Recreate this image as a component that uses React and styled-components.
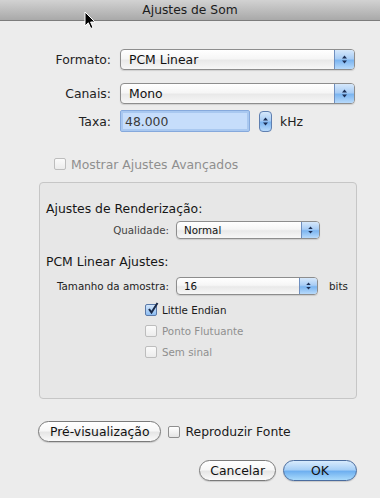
import React from 'react'
import styled, { createGlobalStyle } from 'styled-components'

const GlobalStyle = createGlobalStyle`
  html, body {
    margin: 0;
    padding: 0;
    background: #ececec;
  }
  body {
    font-family: "DejaVu Sans", "Liberation Sans", sans-serif;
    font-size: 12.4px;
    color: #111;
  }
`

const Window = styled.div`
  position: relative;
  width: 380px;
  height: 498px;
  background: #ececec;
  display: flex;
  flex-direction: column;
  overflow: hidden;
`

const TitleBar = styled.div`
  height: 20px;
  border-bottom: 1px solid #7c7c7c;
  background: linear-gradient(#d2d2d2, #a9a9a9);
  display: flex;
  align-items: center;
  justify-content: center;
  color: #1c1c1c;
  font-size: 12.3px;
  flex-shrink: 0;
`

const Content = styled.div`
  display: flex;
  flex-direction: column;
  padding: 28px 23px 0 38px;
`

const Row = styled.div`
  display: flex;
  align-items: center;
  margin-top: ${p => p.mt || 0}px;
  margin-left: ${p => p.ml || 0}px;
`

const Label = styled.span`
  width: ${p => p.w}px;
  text-align: right;
  margin-right: ${p => p.gap || 9}px;
  color: ${p => (p.dim ? '#444' : '#222')};
  font-size: ${p => (p.small ? '10.3px' : '12.4px')};
  flex-shrink: 0;
`

const Popup = styled.div`
  width: ${p => p.w}px;
  height: ${p => p.h}px;
  box-sizing: border-box;
  border: 1px solid #8d8d8d;
  border-radius: 4px;
  background: linear-gradient(#ffffff 0%, #f6f6f6 45%, #e9e9e9 55%, #f7f7f7 100%);
  box-shadow: 0 1px 1px rgba(0, 0, 0, 0.12);
  display: flex;
  align-items: stretch;
  overflow: hidden;
  flex-shrink: 0;
`

const PopupValue = styled.span`
  flex: 1;
  display: flex;
  align-items: center;
  padding-left: ${p => (p.small ? 7 : 8)}px;
  font-size: ${p => (p.small ? '10.3px' : '12.4px')};
  color: #111;
`

const ArrowCap = styled.span`
  width: ${p => (p.small ? 17 : 19)}px;
  border-left: 1px solid #6f8fbf;
  background: linear-gradient(#d6e8fb 0%, #a9cdf5 45%, #7cb5f0 55%, #b8dafb 100%);
  display: flex;
  align-items: center;
  justify-content: center;
`

const Arrows = ({ size = 9 }) => (
  <svg width="7" height={size} viewBox="0 0 7 9">
    <path d="M3.5 0.5 L6 3.5 L1 3.5 Z" fill="#1d2f55" />
    <path d="M3.5 8.5 L6 5.5 L1 5.5 Z" fill="#1d2f55" />
  </svg>
)

const TextField = styled.div`
  width: 130px;
  height: 22px;
  box-sizing: border-box;
  border: 1px solid #86a9dc;
  box-shadow: inset 0 0 0 2px #a9c8f0;
  border-radius: 2px;
  background: #c6ddfb;
  display: flex;
  align-items: center;
  padding-left: 4px;
  color: #3a3a3a;
`

const Stepper = styled.div`
  width: 13px;
  height: 21px;
  box-sizing: border-box;
  margin-left: 9px;
  border: 1px solid #5f7fb0;
  border-radius: 4px;
  background: linear-gradient(#d6e8fb 0%, #a9cdf5 45%, #7cb5f0 55%, #b8dafb 100%);
  display: flex;
  align-items: center;
  justify-content: center;
`

const Unit = styled.span`
  margin-left: ${p => p.gap || 8}px;
  font-size: ${p => (p.small ? '10.3px' : '12.4px')};
  color: #222;
`

const Box = styled.span`
  width: 12px;
  height: 12px;
  box-sizing: border-box;
  border: 1px solid ${p => (p.checked ? '#5a79a8' : p.disabled ? '#bdbdbd' : '#8e8e8e')};
  border-radius: 2px;
  background: ${p =>
    p.checked
      ? 'linear-gradient(#d3e6fb, #8dbdf2)'
      : p.disabled
        ? 'linear-gradient(#fbfbfb, #ececec)'
        : 'linear-gradient(#ffffff, #e4e4e4)'};
  flex-shrink: 0;
  position: relative;
`

const Check = styled.svg`
  position: absolute;
  left: 1px;
  top: -3px;
`

const CheckRow = styled.div`
  display: flex;
  align-items: center;
  height: 16px;
  margin-top: ${p => p.mt || 0}px;
  margin-left: ${p => p.ml || 0}px;
`

const CheckText = styled.span`
  margin-left: ${p => p.gap || 5}px;
  color: ${p => (p.disabled ? '#8f8f8f' : '#1a1a1a')};
  font-size: ${p => (p.small ? '10.3px' : '12.4px')};
`

const Checkbox = ({ checked, disabled, children, small, gap, mt, ml }) => (
  <CheckRow mt={mt} ml={ml}>
    <Box checked={checked} disabled={disabled}>
      {checked && (
        <Check width="12" height="13" viewBox="0 0 12 13">
          <path d="M2 7 L4.5 10.5 L10.5 1" stroke="#1b2a48" strokeWidth="2" fill="none" />
        </Check>
      )}
    </Box>
    <CheckText disabled={disabled} small={small} gap={gap}>
      {children}
    </CheckText>
  </CheckRow>
)

const Group = styled.div`
  margin-top: 10px;
  margin-left: 1px;
  height: 217px;
  box-sizing: border-box;
  border: 1px solid #c6c6c6;
  border-radius: 4px;
  background: #e7e7e7;
  padding: 0 0 0 6px;
  display: flex;
  flex-direction: column;
`

const Heading = styled.div`
  margin-top: ${p => p.mt}px;
  color: #161616;
  line-height: 16px;
`

const Buttons = styled.div`
  display: flex;
  justify-content: flex-end;
  gap: 7px;
  margin-top: 18px;
`

const Button = styled.div`
  height: 21px;
  box-sizing: border-box;
  padding: 0 ${p => p.px || 10}px;
  min-width: ${p => p.w || 0}px;
  border: 1px solid ${p => (p.primary ? '#4a6c9e' : '#7a7a7a')};
  border-radius: 11px;
  background: ${p =>
    p.primary
      ? 'linear-gradient(#d8ebfd 0%, #a8d0f7 45%, #6fb0f0 55%, #a9dafb 100%)'
      : 'linear-gradient(#ffffff 0%, #f7f7f7 45%, #e6e6e6 55%, #fafafa 100%)'};
  box-shadow: 0 1px 1px rgba(0, 0, 0, 0.15);
  display: flex;
  align-items: center;
  justify-content: center;
  color: #111;
`

const Cursor = styled.svg`
  position: absolute;
  left: 84px;
  top: 11px;
`

export default function App() {
  return (
    <Window>
      <GlobalStyle />
      <TitleBar>Ajustes de Som</TitleBar>
      <Content>
        <Row>
          <Label w={73}>Formato:</Label>
          <Popup w={235} h={21}>
            <PopupValue>PCM Linear</PopupValue>
            <ArrowCap>
              <Arrows />
            </ArrowCap>
          </Popup>
        </Row>
        <Row mt={13}>
          <Label w={73}>Canais:</Label>
          <Popup w={235} h={21}>
            <PopupValue>Mono</PopupValue>
            <ArrowCap>
              <Arrows />
            </ArrowCap>
          </Popup>
        </Row>
        <Row mt={6}>
          <Label w={73}>Taxa:</Label>
          <TextField>48.000</TextField>
          <Stepper>
            <Arrows />
          </Stepper>
          <Unit>kHz</Unit>
        </Row>

        <Checkbox disabled mt={24} ml={16}>
          Mostrar Ajustes Avançados
        </Checkbox>

        <Group>
          <Heading mt={18}>Ajustes de Renderização:</Heading>
          <Row mt={4}>
            <Label w={123} gap={7} small dim>
              Qualidade:
            </Label>
            <Popup w={144} h={18}>
              <PopupValue small>Normal</PopupValue>
              <ArrowCap small>
                <Arrows size={8} />
              </ArrowCap>
            </Popup>
          </Row>
          <Heading mt={15}>PCM Linear Ajustes:</Heading>
          <Row mt={7}>
            <Label w={123} gap={7} small>
              Tamanho da amostra:
            </Label>
            <Popup w={142} h={18}>
              <PopupValue small>16</PopupValue>
              <ArrowCap small>
                <Arrows size={8} />
              </ArrowCap>
            </Popup>
            <Unit small gap={11}>
              bits
            </Unit>
          </Row>
          <Checkbox checked small mt={7} ml={99}>
            Little Endian
          </Checkbox>
          <Checkbox disabled small mt={5} ml={99}>
            Ponto Flutuante
          </Checkbox>
          <Checkbox disabled small mt={5} ml={99}>
            Sem sinal
          </Checkbox>
        </Group>

        <Row mt={22}>
          <Button px={11}>Pré-visualização</Button>
          <Checkbox ml={7}>Reproduzir Fonte</Checkbox>
        </Row>

        <Buttons>
          <Button w={73}>Cancelar</Button>
          <Button primary w={74}>
            OK
          </Button>
        </Buttons>
      </Content>

      <Cursor width="13" height="19" viewBox="0 0 13 19">
        <path
          d="M1 1 L1 15 L4.3 11.8 L6.8 17.5 L9 16.5 L6.6 11 L11 11 Z"
          fill="#000"
          stroke="#fff"
          strokeWidth="1"
          strokeLinejoin="round"
        />
      </Cursor>
    </Window>
  )
}
